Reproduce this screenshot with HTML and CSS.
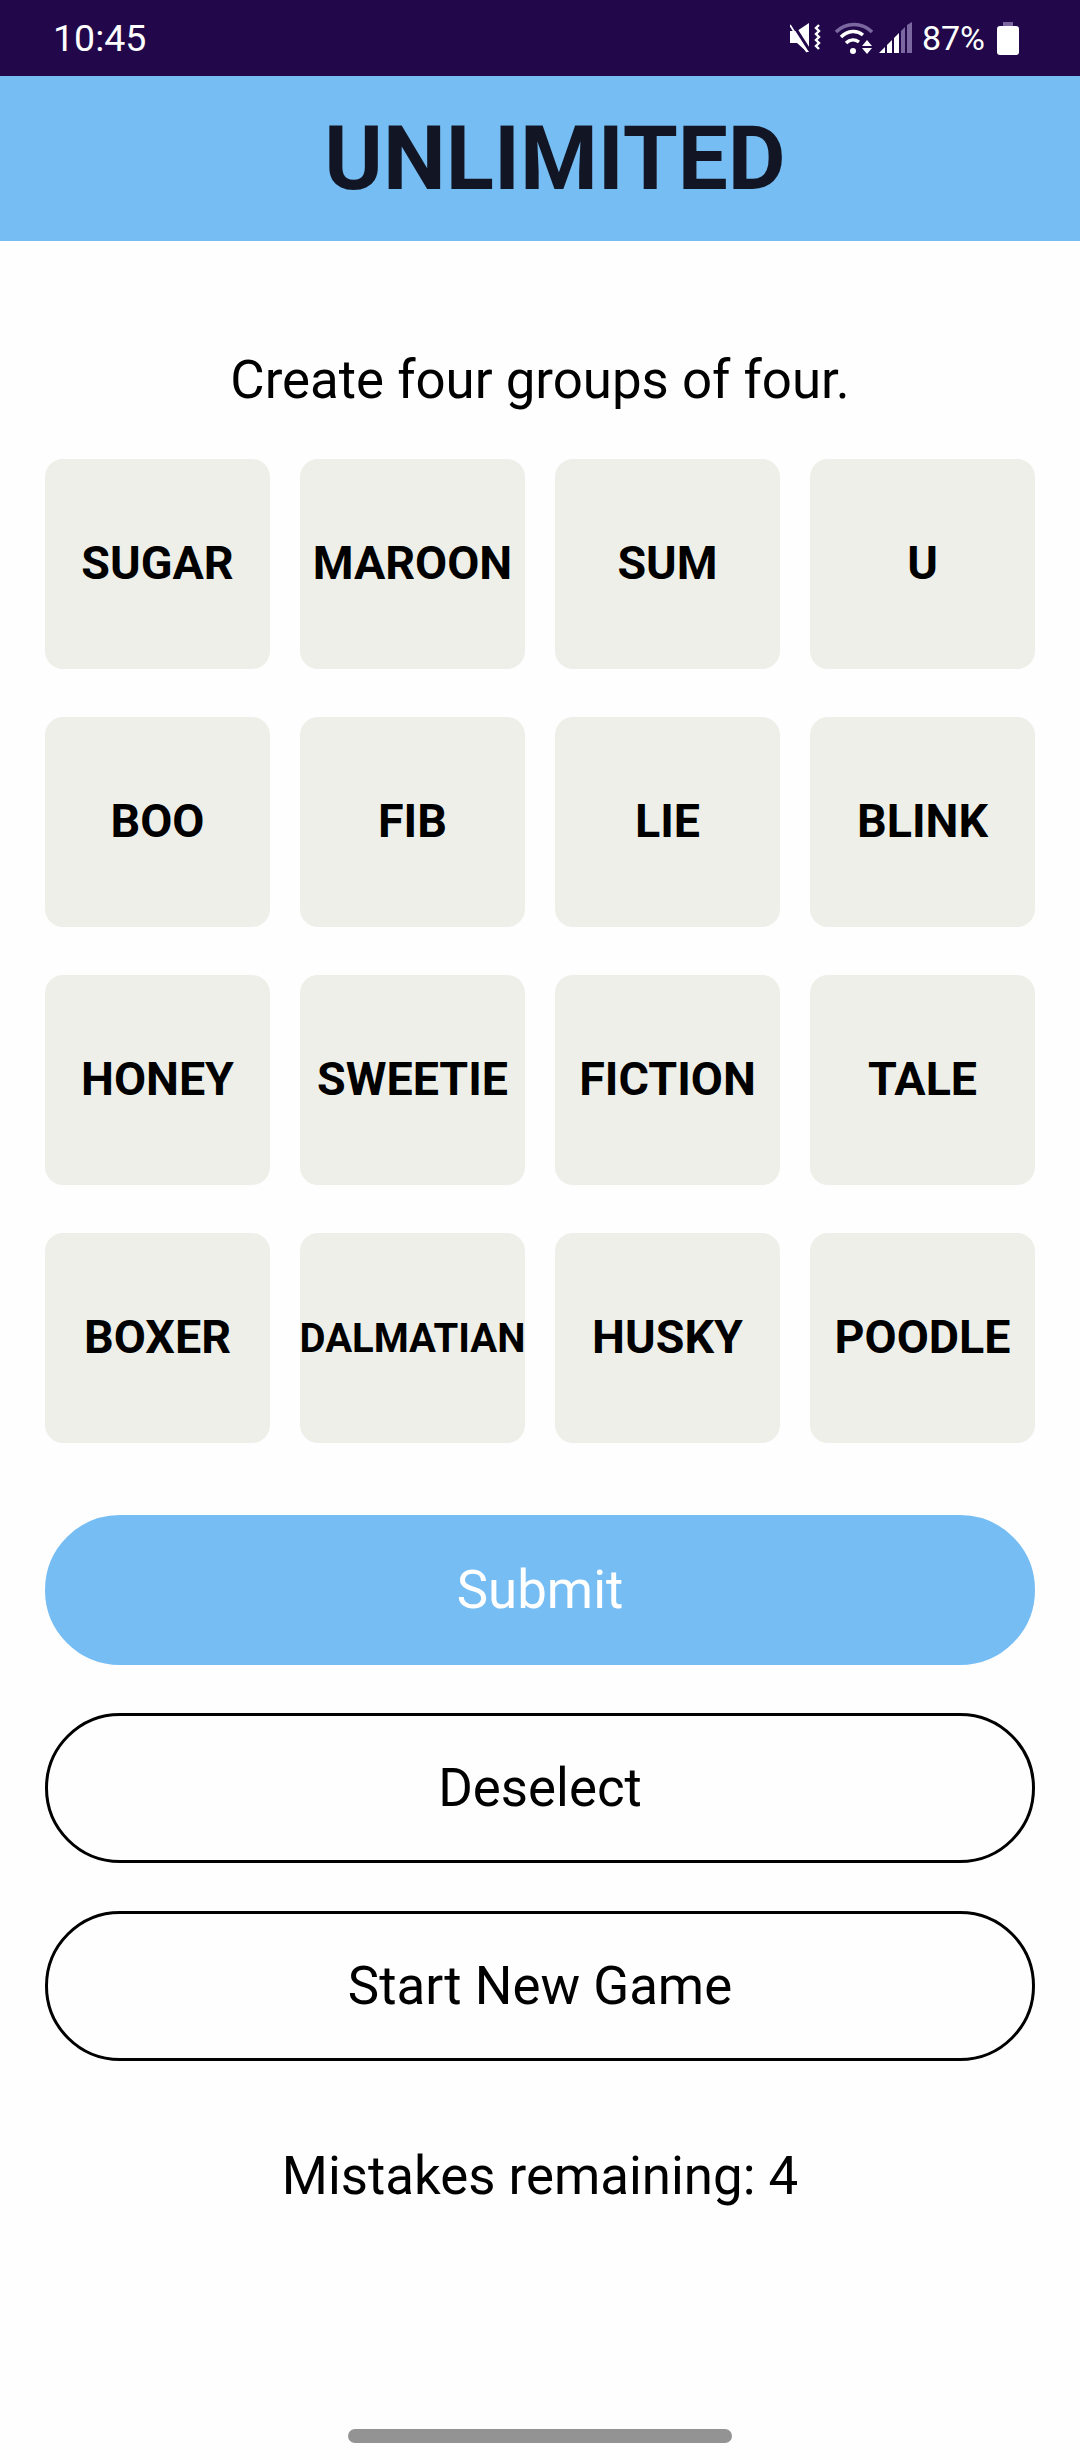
FILE: index.html
```html
<!DOCTYPE html>
<html lang="en">
<head>
<meta charset="UTF-8">
<meta name="viewport" content="width=device-width, initial-scale=1.0">
<title>Unlimited</title>
<link rel="stylesheet" href="styles.css">
</head>
<body>
<div class="status-bar">
  <span class="clock">10:45</span>
  <div class="status-icons">
    <svg class="icon-mute" width="32" height="30" viewBox="0 0 32 30">
      <path d="M0 8h7l12-8v29h-2l-10-9h-7z" fill="#fff"/>
      <path d="M2 0l18 28" stroke="#22084a" stroke-width="3" fill="none"/>
      <path d="M0 2l17 27" stroke="#fff" stroke-width="1.8" fill="none"/>
      <path d="M29 2l-3 3 3 3-3 3 3 3-3 3 3 3-3 3 3 3" stroke="#fff" stroke-width="2.4" fill="none"/>
    </svg>
    <svg class="icon-wifi" width="38" height="33" viewBox="0 0 38 33">
      <path d="M1 10C11 0 27 0 37 10" stroke="#7b68a0" stroke-width="3.4" fill="none"/>
      <path d="M6 15C13 8 22 8 28 13" stroke="#fff" stroke-width="3.4" fill="none"/>
      <path d="M11 21C15 17 20 17 24 20" stroke="#fff" stroke-width="3.4" fill="none"/>
      <circle cx="18" cy="29" r="3" fill="#fff"/>
      <path d="M32 18l5 6h-10zM27 26h10l-5 6z" fill="#fff"/>
    </svg>
    <svg class="icon-signal" width="34" height="32" viewBox="0 0 34 32">
      <path d="M0 31l6 -6v6z" fill="#fff"/>
      <path d="M8 23l5 -5v13h-5z" fill="#fff"/>
      <path d="M15 16l5 -5v20h-5z" fill="#fff"/>
      <path d="M22 9l4 -4v26h-4z" fill="#7b68a0"/>
      <path d="M28 3l5 -3v31h-5z" fill="#7b68a0"/>
    </svg>
    <span class="battery-level">87%</span>
    <svg class="icon-battery" width="22" height="33" viewBox="0 0 22 33">
      <path d="M6 0h10v4h-10z" fill="#7b68a0"/>
      <rect x="0" y="4" width="22" height="29" rx="3" fill="#fff"/>
    </svg>
  </div>
</div>

<header class="title-bar">
  <h1>UNLIMITED</h1>
</header>

<main class="game">
  <p class="prompt">Create four groups of four.</p>
  <div class="board">
    <div class="tile">SUGAR</div>
    <div class="tile">MAROON</div>
    <div class="tile">SUM</div>
    <div class="tile">U</div>
    <div class="tile">BOO</div>
    <div class="tile">FIB</div>
    <div class="tile">LIE</div>
    <div class="tile">BLINK</div>
    <div class="tile">HONEY</div>
    <div class="tile">SWEETIE</div>
    <div class="tile">FICTION</div>
    <div class="tile">TALE</div>
    <div class="tile">BOXER</div>
    <div class="tile tile-long">DALMATIAN</div>
    <div class="tile">HUSKY</div>
    <div class="tile">POODLE</div>
  </div>
  <div class="actions">
    <button class="btn btn-submit">Submit</button>
    <button class="btn">Deselect</button>
    <button class="btn">Start New Game</button>
  </div>
  <p class="mistakes">Mistakes remaining: 4</p>
</main>

<div class="home-row">
  <div class="home-bar"></div>
</div>
</body>
</html>
```

FILE: styles.css
```css
body {
  font-family: Roboto, "Liberation Sans", sans-serif;
  background-color: #fefefe;
  color: #000;
  margin: 0;
  height: 2460px;
  display: flex;
  flex-direction: column;
  overflow: hidden;
}
.status-bar {
  height: 76px;
  background-color: #22084a;
  color: #fff;
  display: flex;
  align-items: center;
  justify-content: space-between;
  padding: 0 61px 0 53px;
  flex-shrink: 0;
}
.clock {
  font-size: 37.5px;
}
.status-icons {
  display: flex;
  align-items: center;
}
.status-icons svg {
  display: block;
}
.icon-wifi {
  margin-left: 13px;
}
.icon-signal {
  margin-left: 6px;
}
.battery-level {
  font-size: 34px;
  margin-left: 9px;
}
.icon-battery {
  margin-left: 12px;
}
.title-bar {
  height: 165px;
  background-color: #76bdf4;
  display: flex;
  align-items: center;
  justify-content: center;
  padding-left: 30px;
  flex-shrink: 0;
}
h1 {
  font-size: 89px;
  font-weight: 700;
  color: #121624;
  margin: 0;
  line-height: 1;
}
.game {
  flex: 1;
  padding: 0 45px;
}
.prompt {
  font-size: 52.8px;
  line-height: 64px;
  margin: 107px 0 0;
  text-align: center;
}
.board {
  display: grid;
  grid-template-columns: repeat(4, 225px);
  grid-auto-rows: 210px;
  column-gap: 30px;
  row-gap: 48px;
  margin-top: 47px;
}
.tile {
  background-color: #efefe9;
  border-radius: 18px;
  display: flex;
  align-items: center;
  justify-content: center;
  padding-bottom: 3px;
  box-sizing: border-box;
  font-size: 46.6px;
  font-weight: 700;
  white-space: nowrap;
}
.tile-long {
  font-size: 40px;
  padding-bottom: 0;
}
.actions {
  display: flex;
  flex-direction: column;
  gap: 48px;
  margin-top: 72px;
}
.btn {
  height: 150px;
  background-color: transparent;
  border: 3px solid #000;
  border-radius: 75px;
  font-family: inherit;
  font-size: 52.8px;
  color: #000;
  padding: 0;
}
.btn-submit {
  background-color: #76bdf4;
  border-color: #76bdf4;
  color: #fff;
}
.mistakes {
  font-size: 52.8px;
  line-height: 60px;
  text-align: center;
  margin: 85px 0 0;
}
.home-row {
  display: flex;
  justify-content: center;
  padding-bottom: 17px;
  flex-shrink: 0;
}
.home-bar {
  width: 384px;
  height: 14px;
  border-radius: 7px;
  background-color: #939393;
}
```
